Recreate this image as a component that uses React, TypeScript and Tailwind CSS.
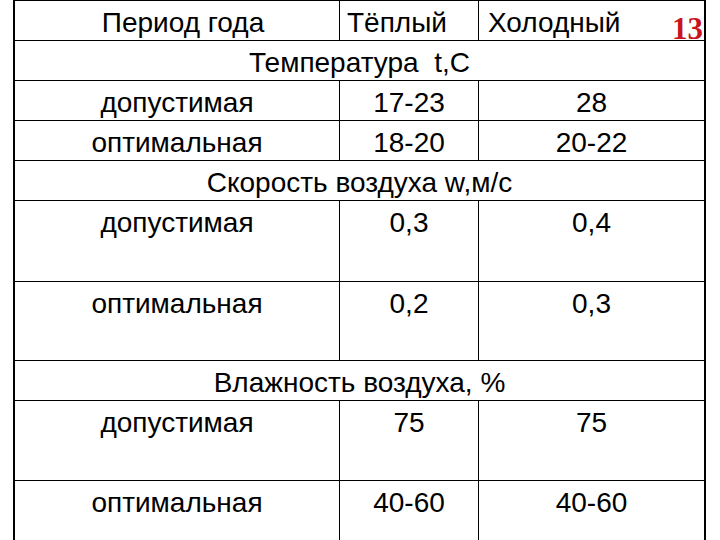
import React from "react"

const font = { fontFamily: '"Liberation Sans", Arial, sans-serif' }

type Row =
  | { kind: "section"; label: string; h: string }
  | { kind: "data"; name: string; warm: string; cold: string; h: string }

const rows: Row[] = [
  { kind: "section", label: "Температура  t,C", h: "h-[40px]" },
  { kind: "data", name: "допустимая", warm: "17-23", cold: "28", h: "h-[40px]" },
  { kind: "data", name: "оптимальная", warm: "18-20", cold: "20-22", h: "h-[40px]" },
  { kind: "section", label: "Скорость воздуха w,м/с", h: "h-[40px]" },
  { kind: "data", name: "допустимая", warm: "0,3", cold: "0,4", h: "h-[81px]" },
  { kind: "data", name: "оптимальная", warm: "0,2", cold: "0,3", h: "h-[79px]" },
  { kind: "section", label: "Влажность воздуха, %", h: "h-[40px]" },
  { kind: "data", name: "допустимая", warm: "75", cold: "75", h: "h-[80px]" },
  { kind: "data", name: "оптимальная", warm: "40-60", cold: "40-60", h: "h-[81px]" },
]

export default function App() {
  return (
    <div className="w-[720px] h-[540px] overflow-hidden bg-white text-black" style={font}>
      <div className="relative ml-[13px] w-[693px] border-t border-l-2 border-r-2 border-black text-[28px] leading-[32px]">
        {/* Header */}
        <div className="flex h-[40px] border-b border-black">
          <div className="w-[324px] pt-[6px] pl-3 text-center">Период года</div>
          <div className="w-[139px] border-l border-black pt-[6px] pl-[7px]">Тёплый</div>
          <div className="flex-1 border-l border-black pt-[6px] pl-[9px]">Холодный</div>
        </div>

        {rows.map((r, i) =>
          r.kind === "section" ? (
            <div key={i} className={`${r.h} border-b border-black pt-[6px] text-center whitespace-pre`}>
              {r.label}
            </div>
          ) : (
            <div key={i} className={`flex ${r.h} border-b border-black`}>
              <div className="w-[324px] pt-[6px] text-center">{r.name}</div>
              <div className="w-[139px] border-l border-black pt-[6px] text-center">{r.warm}</div>
              <div className="flex-1 border-l border-black pt-[6px] text-center">{r.cold}</div>
            </div>
          )
        )}

        {/* page number */}
        <span
          className="absolute left-[657px] top-[12px] text-[31px] font-bold leading-none text-[#c8141e]"
          style={{ fontFamily: '"Liberation Serif", "Times New Roman", serif' }}
        >
          13
        </span>
      </div>
    </div>
  )
}
